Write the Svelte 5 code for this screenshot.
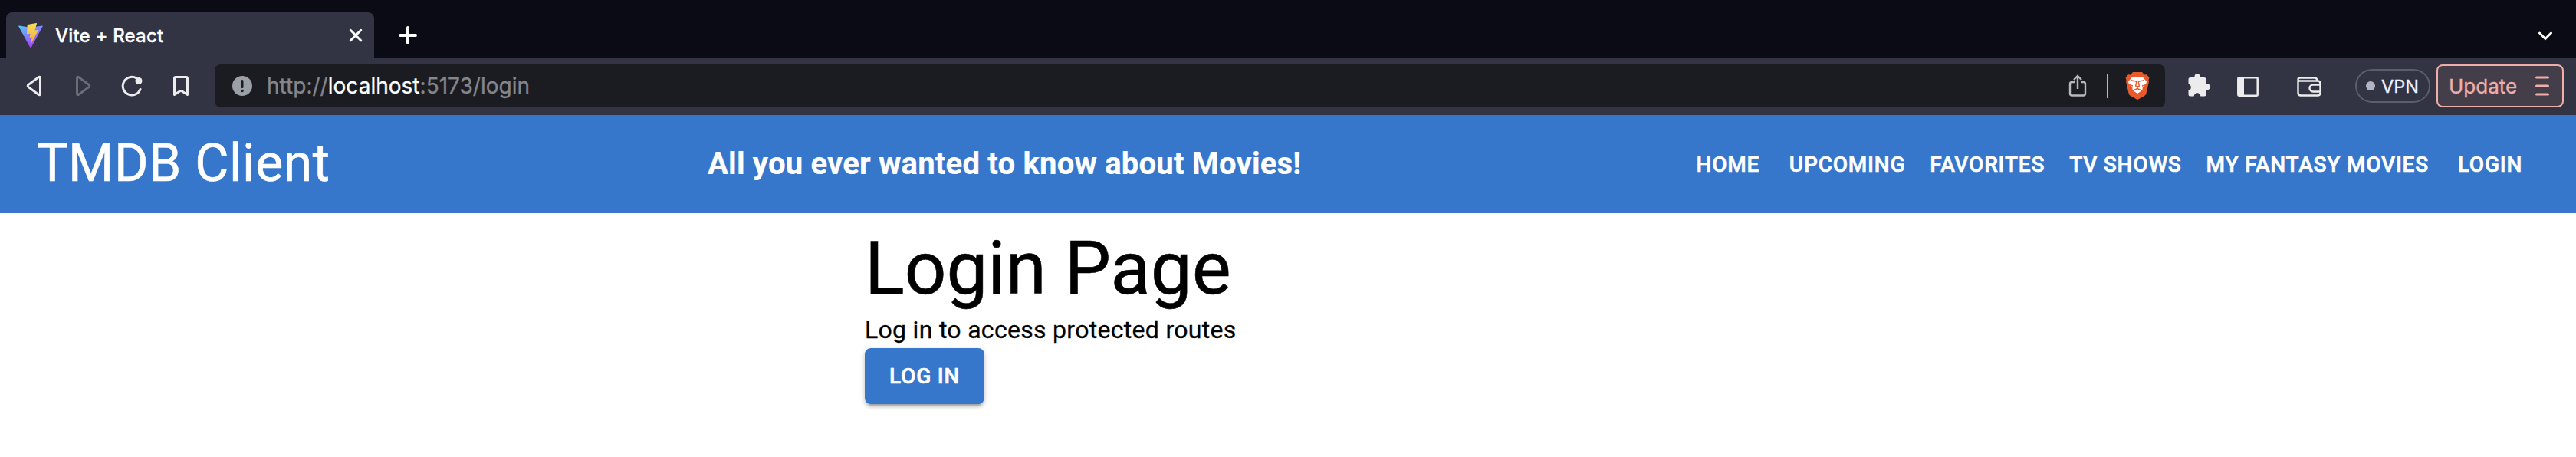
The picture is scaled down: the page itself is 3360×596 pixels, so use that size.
<script>
  const nav = [
    { label: 'Home' },
    { label: 'Upcoming' },
    { label: 'Favorites' },
    { label: 'TV Shows' },
    { label: 'My Fantasy Movies' },
    { label: 'Login' }
  ];
</script>

<div class="window">
  <div class="tabs">
    <div class="tab">
      <svg class="vite" width="32" height="32" viewBox="0 0 32 36" preserveAspectRatio="none">
        <defs>
          <linearGradient id="vb" x1="0" y1="0" x2=".6" y2="1"><stop offset="0" stop-color="#55c8ff" /><stop offset="1" stop-color="#b03cf8" /></linearGradient>
          <linearGradient id="vy" x1="0" y1="0" x2="0" y2="1"><stop offset="0" stop-color="#fbdc60" /><stop offset=".3" stop-color="#f8cf50" /><stop offset="1" stop-color="#f3a83b" /></linearGradient>
        </defs>
        <path d="M1.2 4 15.2 6.5q.8.1 1.600 0L30.8 4q1.500-.2.8 1.100L16.900 35.300q-.9 1.400-1.800 0L.4 5.100Q-.3 3.800 1.200 4Z" fill="url(#vb)" />
        <path d="M23.300.1 12.300 2.200q-.5.1-.6.6l-.7 12.700q0 .7.8.6l3.100-.7q.7-.1.6.6l-.9 4.900q-.1.7.6.6l1.900-.6q.7-.1.6.6l-1.500 7.800q.2 1.100.9.200L25.700 11q.4-.8-.5-.8l-3.100.6q-.7.1-.5-.6L24 .8q.1-.8-.7-.7Z" fill="url(#vy)" />
      </svg>
      <span class="title">Vite + React</span>
      <svg class="close" width="18" height="18" viewBox="0 0 18 18"><path d="m2.250 2.250 13.500 13.500M15.750 2.250 2.250 15.750" stroke="#fff" stroke-width="3" stroke-linecap="round" /></svg>
    </div>
    <svg class="plus" width="24" height="24" viewBox="0 0 24 24"><path d="M12 2v20M2 12h20" stroke="#fff" stroke-width="4" stroke-linecap="round" /></svg>
    <svg class="chev" width="20" height="12" viewBox="0 0 20 12"><path d="m2.500 2 7.500 7.500L17.500 2" fill="none" stroke="#fff" stroke-width="3" stroke-linecap="round" /></svg>
  </div>

  <div class="toolbar">
    <div class="buttons">
      <svg width="22" height="28" viewBox="0 0 22 28"><path d="M3.200 12.400 16.200 2.800q2.300-1.400 2.300 1.200v20q0 2.600-2.300 1.200L3.200 15.600q-2-1.600 0-3.200Z" fill="none" stroke="#ececec" stroke-width="3" /></svg>
      <svg width="22" height="28" viewBox="0 0 22 28"><path d="M18.800 12.400 5.800 2.800Q3.500 1.400 3.500 4v20q0 2.600 2.300 1.200l13-9.600q2-1.600 0-3.200Z" fill="none" stroke="#6b6c77" stroke-width="3" /></svg>
      <svg width="28" height="28" viewBox="0 0 28 28"><path d="M20 4A11.800 11.800 0 1 0 25 18.500" fill="none" stroke="#ececec" stroke-width="3" stroke-linecap="round" /><circle cx="23" cy="7.500" r="4.500" fill="#ececec" /></svg>
      <svg width="20" height="26" viewBox="0 0 20 26"><path d="M1.500 3Q1.500 1.500 3 1.500H17q1.500 0 1.500 1.500V24.500L11.500 20q-1.500-1-3 0L1.500 24.500Z" fill="none" stroke="#ececec" stroke-width="3" stroke-linejoin="round" /></svg>
    </div>
    <div class="address">
      <svg class="info" width="26" height="26" viewBox="0 0 26 26"><circle cx="13" cy="13" r="13" fill="#9aa0a6" /><path d="M13 6.500v8" stroke="#1b1c21" stroke-width="3" stroke-linecap="round" /><circle cx="13" cy="19.500" r="1.800" fill="#1b1c21" /></svg>
      <span class="url">http://<b>localhost</b>:5173/login</span>
      <svg class="share" width="24" height="30" viewBox="0 0 24 30"><path d="M8 10H4.500Q2 10 2 12.500V25q0 2.500 2.500 2.500h15Q22 27.500 22 25V12.500Q22 10 19.500 10H16M12 19V3M7 7l5-5 5 5" fill="none" stroke="#b7b8ba" stroke-width="2.400" /></svg>
      <i class="rule"></i>
      <svg class="brave" width="32" height="36" viewBox="0 0 32 36">
        <path d="M10 0h12l3 3.500 3-.3 3.500 4-1 3 .5 2-3.500 15.500q-.5 2-2 3L17.500 35.300q-1.500 1-3 0L6.500 30.700q-1.500-1-2-3L1 12.200l.5-2-1-3L4 3.200l3 .3Z" fill="#e85a2b" />
        <path d="m9.500 6 4 .8q2.500.5 5 0l4-.8 5.500 6.500-1 3.500-4.500 4.500v3L16 28l-6.500-4.500v-3L5 16l-1-3.500Z" fill="#fff" />
        <path d="M7.500 10.800 14 12q.8.300.7 1.200l-1 4.800 2.300 1.200 2.300-1.200-1-4.800q-.1-.9.7-1.200l6.500-1.200M16 19v2.500L9.500 24.500M16 21.500l6.500 3M5 16.500l5 1.500M27 16.500 22 18" fill="none" stroke="#e85a2b" stroke-width="1.500" />
      </svg>
    </div>
    <svg class="puzzle" width="30" height="30" viewBox="0 0 30 30"><path d="M3 4h5.800a3.500 3.500 0 1 1 6.400 0H21q2.500 0 2.500 2.500V12.300h1.200a4 4 0 0 1 0 8h-1.200V26q0 2.500-2.500 2.500h-4.700a4.300 4.300 0 0 0-8.600 0H3q-2.500 0-2.500-2.500V21a4.200 4.200 0 0 0 0-8.200V6.500Q.5 4 3 4Z" fill="#ececec" /></svg>
    <svg class="panel" width="28" height="26" viewBox="0 0 28 26"><rect x="1.300" y="1.300" width="25.400" height="23.400" rx="1.500" fill="none" stroke="#ececec" stroke-width="2.500" /><path d="M1 1h8v24H1Z" fill="#ececec" /></svg>
    <svg class="wallet" width="32" height="26" viewBox="0 0 32 26"><path d="M1.500 5v16q0 3.500 3.500 3.500h22q3.500 0 3.500-3.500V9q0-3.500-3.500-3.500H4Q1.500 5.500 1.500 3.500T4 1.500H23q3 0 4 4M30.500 10.500H21a4.500 4.500 0 0 0 0 9h9.500" fill="none" stroke="#ececec" stroke-width="2.400" /></svg>
    <div class="vpn"><i></i><span>VPN</span></div>
    <div class="update"><span>Update</span>
      <svg width="18" height="26" viewBox="0 0 18 26"><path d="M1.500 2h15M1.500 13h15M1.500 24h15" stroke="#efaea8" stroke-width="3" stroke-linecap="round" /></svg>
    </div>
  </div>

  <header>
    <h1>TMDB Client</h1>
    <h2>All you ever wanted to know about Movies!</h2>
    <nav>
      {#each nav as item}<a>{item.label}</a>{/each}
    </nav>
  </header>

  <main>
    <h3>Login Page</h3>
    <p>Log in to access protected routes</p>
    <button>Log In</button>
  </main>
</div>

<style>
  :global(body) { background: #fff; }
  .window { width: 3360px; height: 596px; overflow: hidden; font-family: Roboto, sans-serif; background: #fff; color: #000; -webkit-text-stroke: .6px currentColor; }
  svg { display: block; flex: none; }
  h1, h2, h3, p { margin: 0; white-space: nowrap; }
  .tabs { height: 76px; background: #0b0b15; display: flex; align-items: center; padding-left: 8px; box-sizing: border-box; font-family: Inter, sans-serif; -webkit-text-stroke-width: .3px; }
  .tab { width: 480px; height: 60px; align-self: flex-end; background: #323443; border-radius: 8px 8px 0 0; display: flex; align-items: center; padding: 0 16px; box-sizing: border-box; color: #fff; }
  .title { font-size: 24px; font-weight: 500; margin-left: 16px; letter-spacing: .18px; white-space: nowrap; }
  .close { margin-left: auto; margin-right: -1px; }
  .plus { margin: 16px 0 0 32px; }
  .chev { margin: 17px 30px 0 auto; }
  .toolbar { height: 74px; background: #323443; display: flex; align-items: center; box-sizing: border-box; padding: 0 16px 2px 34px; font-family: Inter, sans-serif; -webkit-text-stroke-width: .3px; }
  .toolbar .vpn, .toolbar .update, .address { flex: none; box-sizing: border-box; }
  .buttons { display: flex; width: 246px; align-items: center; }
  .buttons svg:nth-child(2) { margin-left: 41px; }
  .buttons svg:nth-child(3) { margin-left: 39px; }
  .buttons svg:nth-child(4) { margin-left: 40px; }
  .address { width: 2544px; height: 56px; border-radius: 8px; background: #1b1c21; display: flex; align-items: center; padding: 0 20px 0 23px; color: #85868b; }
  .url { font-size: 28px; margin-left: 19px; letter-spacing: .02px; white-space: nowrap; }
  .url b { font-weight: 400; color: #fff; }
  .share { margin-left: auto; }
  .rule { width: 2px; height: 32px; background: #b7b8ba; margin: 0 22px 0 26px; }
  .puzzle { margin-left: 30px; }
  .panel { margin: 1px 0 0 34px; }
  .wallet { margin: 2px 0 0 50px; }
  .vpn { width: 98px; height: 44px; border: 2px solid #5d5e6c; border-radius: 22px; margin-left: 44px; display: flex; align-items: center; padding-left: 12px; color: #eef0ff; font-size: 23.500px; }
  .vpn i { width: 12px; height: 12px; border-radius: 50%; background: #b1b3c4; margin-right: 8px; }
  .update { width: 166px; height: 56px; border: 2px solid #efaea8; border-radius: 8px; margin-left: 8px; background: #443e4b; color: #efaea8; display: flex; align-items: center; justify-content: space-between; padding: 0 17px 0 14px; font-size: 26px; }
  header { height: 128px; background: #3676cb; display: grid; grid-template-columns: 874px 1fr auto; align-items: center; padding: 0 48px; box-sizing: border-box; color: #fff; }
  h1 { font-size: 68px; font-weight: 400; line-height: 84px; letter-spacing: .00735em; padding-bottom: 2px; }
  h2 { font-size: 40px; font-weight: 700; line-height: 64px; letter-spacing: .21px; padding-left: 1px; -webkit-text-stroke-width: .2px; }
  nav { display: flex; }
  a, button { font: 500 28px/49px Roboto, sans-serif; letter-spacing: .02857em; text-transform: uppercase; }
  a { min-width: 128px; padding: 12px 16px; box-sizing: border-box; text-align: center; white-space: nowrap; }
  main { width: 1104px; margin: 0 auto; padding-top: 16px; }
  h3 { font-size: 96px; font-weight: 400; line-height: 112px; }
  p { font-size: 32px; line-height: 48px; letter-spacing: .00938em; -webkit-text-stroke-width: .3px; }
  button { display: block; border: 0; border-radius: 8px; padding: 12px 32px; background: #3676cb; color: #fff; -webkit-text-stroke: .6px #fff; box-shadow: 0 6px 2px -4px rgba(0, 0, 0, .2), 0 4px 4px rgba(0, 0, 0, .14), 0 2px 10px rgba(0, 0, 0, .12); }
</style>
